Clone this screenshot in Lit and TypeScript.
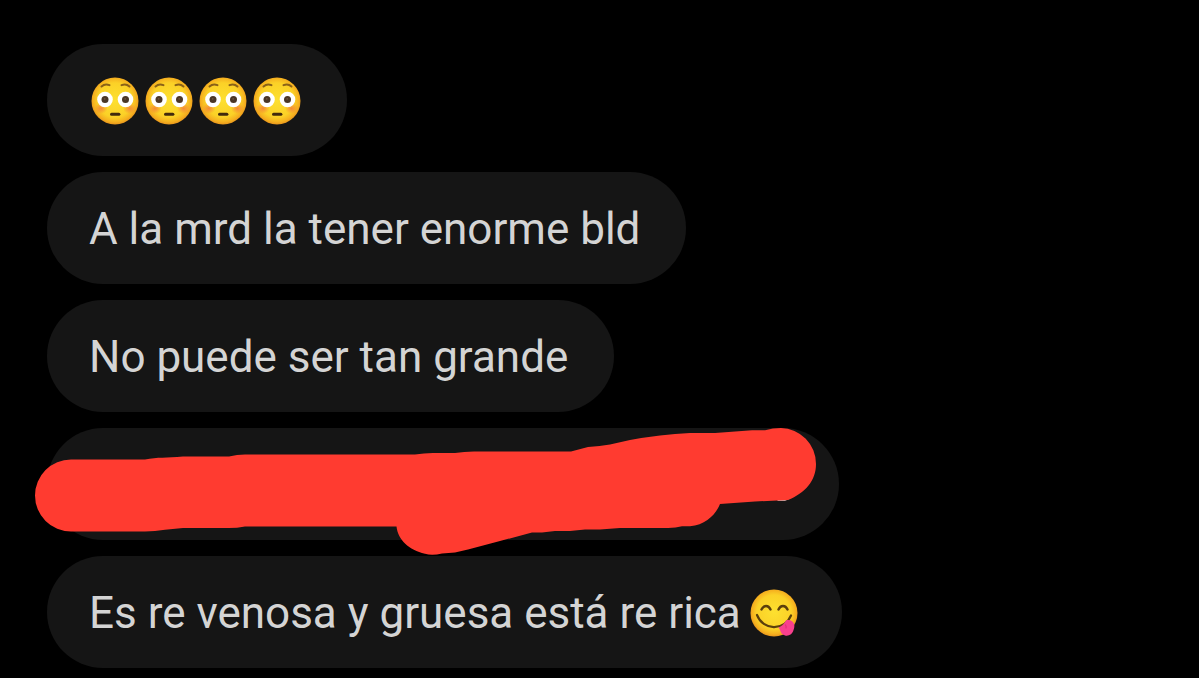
import { LitElement, html, css, svg } from "lit";
import { customElement } from "lit/decorators.js";

const faceFill = svg`
  <defs>
    <radialGradient id="face" cx="50%" cy="48%" r="52%">
      <stop offset="0" stop-color="#fde030"></stop>
      <stop offset="0.7" stop-color="#fbd127"></stop>
      <stop offset="0.9" stop-color="#f5b01f"></stop>
      <stop offset="1" stop-color="#e8951c"></stop>
    </radialGradient>
    <radialGradient id="blush">
      <stop offset="0" stop-color="#f2703c" stop-opacity="0.75"></stop>
      <stop offset="1" stop-color="#f2703c" stop-opacity="0"></stop>
    </radialGradient>
  </defs>`;

@customElement("emoji-flushed")
export class EmojiFlushed extends LitElement {
  static styles = css`
    :host { display: block; width: 50px; height: 50px; }
    svg { display: block; width: 100%; height: 100%; }
  `;
  render() {
    return html`<svg viewBox="0 0 50 50" role="img" aria-label="😳">
      ${faceFill}
      <circle cx="25" cy="25" r="23.5" fill="url(#face)"></circle>
      <ellipse cx="11" cy="32.500" rx="6.500" ry="5.500" fill="url(#blush)"></ellipse>
      <ellipse cx="39.500" cy="32.500" rx="6.500" ry="5.500" fill="url(#blush)"></ellipse>
      <path d="M11.500 10.500q3.500-3.300 8-1.300M31.500 9.200q4.500-2 8 1.300" fill="none" stroke="#8a6118" stroke-width="2" stroke-linecap="round"></path>
      <circle cx="15" cy="23.500" r="7.800" fill="#fff"></circle>
      <circle cx="35.500" cy="23.500" r="7.800" fill="#fff"></circle>
      <circle cx="15" cy="23.500" r="3.500" fill="#4a3626"></circle>
      <circle cx="35.500" cy="23.500" r="3.500" fill="#4a3626"></circle>
      <circle cx="14.700" cy="22.800" r="0.900" fill="#6b5442"></circle>
      <circle cx="35.200" cy="22.800" r="0.900" fill="#6b5442"></circle>
      <rect x="20" y="36.700" width="10.400" height="3" rx="1.500" fill="#422b0d"></rect>
    </svg>`;
  }
}

@customElement("emoji-yum")
export class EmojiYum extends LitElement {
  static styles = css`
    :host { display: block; width: 50px; height: 50px; }
    svg { display: block; width: 100%; height: 100%; }
  `;
  render() {
    return html`<svg viewBox="0 0 50 50" role="img" aria-label="😋">
      ${faceFill}
      <circle cx="25" cy="25" r="23.5" fill="url(#face)"></circle>
      <path d="M12.500 21.500q1.500-3.500 4.500-3.500t4.500 3.500M29.500 21.500q1.500-3.500 4.500-3.500t4.500 3.500" fill="none" stroke="#5b3f0c" stroke-width="2.400" stroke-linecap="round"></path>
      <path d="M8 27C14 42.500 35 43.500 42 27.500" fill="none" stroke="#5b3f0c" stroke-width="2.200" stroke-linecap="round"></path>
      <path d="M29.500 39.500c3-.8 5.500-3.300 7.500-7 3.300-1.500 7.500.5 8.300 4.200.3 2.300-.3 3.800-.8 5.300-.8 4-4.800 6.500-8.500 5.500-3.200-.8-4.500-3.500-5-5.500-.2-1-.8-1.800-1.500-2.500z" fill="#f8408e"></path>
      <path d="M36.500 37q1 1.500.5 3" fill="none" stroke="#e52c7a" stroke-width="1.200" stroke-linecap="round"></path>
    </svg>`;
  }
}

@customElement("app-root")
export class AppRoot extends LitElement {
  static styles = css`
    :host {
      display: block;
      box-sizing: border-box;
      min-height: 100vh;
      padding: 44px 47px 10px;
      background: #000;
      color: #d4d4d4;
      font-family: Roboto, "Liberation Sans", sans-serif;
      font-size: 44px;
      line-height: 56px;
    }
    .thread {
      display: flex;
      flex-direction: column;
      align-items: flex-start;
      gap: 16px;
      margin: 0;
      padding: 0;
      list-style: none;
    }
    .bubble {
      position: relative;
      display: flex;
      align-items: center;
      box-sizing: border-box;
      min-height: 112px;
      max-width: 100%;
      padding: 29px 46px 27px 42px;
      border-radius: 56px;
      background: #151515;
    }
    .emojis {
      gap: 4px;
      padding-inline: 43px 45px;
    }
    .mixed {
      gap: 8px;
      padding-inline-end: 43px;
    }
    .hidden { width: 792px; }
    .scribble {
      position: absolute;
      left: -12px;
      top: 0;
      z-index: 1;
      width: 782px;
      height: 128px;
    }
  `;

  render() {
    return html`<ul class="thread">
      <li class="bubble emojis">
        ${[0, 1, 2, 3].map(() => html`<emoji-flushed></emoji-flushed>`)}
      </li>
      <li class="bubble">A la mrd la tener enorme bld</li>
      <li class="bubble">No puede ser tan grande</li>
      <li class="bubble hidden">
        <svg class="scribble" viewBox="35 428 782 128" aria-hidden="true">
          <path d="M776 499h13l-4 2h-7z" fill="#b9aaa8"></path>
          <path fill="#ff3b30" d="M71 459.500H145C158 457 166 458 183 456.500H229Q237 454.500 245 454.500H415Q425 452.800 435 453H455Q464 451.500 474 451.500H571L588 447Q600 446 610 444.500L630 440Q660 434.500 690 433H715L752 430.300H765Q773 428 781 428A35.500 36 0 0 1 816 464C816 481 805 493 788 500L755 501.500 720 504C716 514 706 525 690 526.300H682Q676 528 668 528H620L600 529.500H585L570 531H555L542 532.500H532L500 541 468 549.500 455 552.500 442 553.500Q432 556 425 553.800C409 550 398 540 396.500 526.500H245Q237 528 229 528H183L165 529.800Q155 531.500 145 531.500H71A36 36 0 0 1 71 459.500Z"></path>
        </svg>
      </li>
      <li class="bubble mixed">
        <span>Es re venosa y gruesa está re rica</span><emoji-yum></emoji-yum>
      </li>
    </ul>`;
  }
}
